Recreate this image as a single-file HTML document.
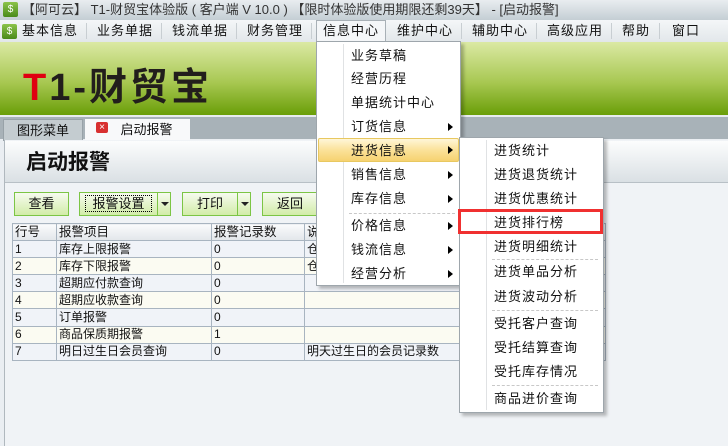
<!DOCTYPE html>
<html><head><meta charset="utf-8"><style>
*{margin:0;padding:0;box-sizing:border-box}
body{width:728px;height:446px;overflow:hidden;background:#eaeef2;font-family:"Liberation Sans","Noto Sans CJK SC","WenQuanYi Zen Hei",sans-serif;font-size:13px;color:#111;position:relative}
.abs{position:absolute}
#title{left:0;top:0;width:728px;height:20px;background:linear-gradient(#e9edf0,#c4ced4);color:#333;font-size:13px;line-height:20px;padding-left:22px}
.ico{width:15px;height:15px;background:linear-gradient(#8cc34a,#4a8a1a);border-radius:2px;color:#fff;font-size:10px;text-align:center;line-height:15px}
#menu{left:0;top:20px;width:728px;height:22px;background:linear-gradient(#f4f6f8,#e2e7ea);line-height:22px}
#menu span{position:absolute;top:0;font-size:13px;letter-spacing:1px;white-space:nowrap}
.msep{position:absolute;top:3px;width:1px;height:16px;background:#c8ced2}
#banner{left:0;top:42px;width:728px;height:73px;background:linear-gradient(#dbe9a4,#a8c852 55%,#6a9e08)}
#logo{left:23px;top:56px;font-size:38px;font-weight:bold;color:#221e1c;letter-spacing:3px;font-family:"Liberation Sans","Noto Sans CJK SC",sans-serif}
#tabs{left:0;top:115px;width:728px;height:24px;background:#a8b2b8;border-top:2px solid #e8ecee}
.tab{position:absolute;top:2px;height:22px;line-height:22px;text-align:center}
#panel{left:4px;top:140px;width:724px;height:306px;background:#f0f3f6;border-left:1px solid #b0b8be}
#ph{left:5px;top:141px;width:723px;height:42px;background:linear-gradient(#fcfdfd,#dae0e4);border-bottom:1px solid #b8c0c6;font-size:21px;font-weight:bold;line-height:44px;padding-left:21px;color:#111}
.btn{position:absolute;top:192px;height:24px;border:1px solid #7cc545;background:linear-gradient(#f6fbef,#d2eca8);text-align:center;line-height:22px;font-size:13px}
.dd{position:absolute;top:192px;height:24px;width:14px;border:1px solid #7cc545;background:linear-gradient(#f6fbef,#d2eca8)}
.dd:after{content:"";position:absolute;left:3px;top:9px;border:4px solid transparent;border-top:4px solid #222}
table{position:absolute;left:12px;top:223px;border-collapse:collapse;font-size:12px;width:594px;background:#f0f3f8}
td{border:1px solid #a8b4c0;height:17.1px;padding:0 2px;line-height:15px;white-space:nowrap;overflow:hidden}
tr.h td{background:linear-gradient(#fafbfc,#e2e6ea);font-size:12.5px}
tr.y td{background:#fbfbf2}
.pop{position:absolute;background:#fff;border:1px solid #9ea6ac;box-shadow:3px 3px 3px rgba(0,0,0,.25)}
.gut{position:absolute;top:2px;bottom:2px;width:1px;background:#e0e2e4}
.mi{position:absolute;font-size:13px;line-height:16px;letter-spacing:1px}
.arr{position:absolute;border:4px solid transparent;border-left:5px solid #000;width:0;height:0}
.sep{position:absolute;height:0;border-top:1px dashed #c8c8c8}
</style></head><body>
<div id="title" class="abs">【阿可云】 T1-财贸宝体验版 ( 客户端 V 10.0 ) 【限时体验版使用期限还剩39天】 - [启动报警]</div>
<div class="abs ico" style="left:3px;top:2px">&#36;</div>
<div id="menu" class="abs">
<div class="abs ico" style="left:2px;top:4px">&#36;</div>
<span style="left:22px">基本信息</span><div class="msep" style="left:86px"></div>
<span style="left:97px">业务单据</span><div class="msep" style="left:161px"></div>
<span style="left:172px">钱流单据</span><div class="msep" style="left:236px"></div>
<span style="left:247px">财务管理</span><div class="msep" style="left:311px"></div>
<span style="left:316px;top:0;height:22px;width:70px;padding-left:6px;border:1px solid #a8b0b6;border-bottom:none;background:#f4f6f8;line-height:20px">信息中心</span>
<span style="left:397px">维护中心</span><div class="msep" style="left:461px"></div>
<span style="left:472px">辅助中心</span><div class="msep" style="left:536px"></div>
<span style="left:547px">高级应用</span><div class="msep" style="left:611px"></div>
<span style="left:622px">帮助</span><div class="msep" style="left:659px"></div>
<span style="left:672px">窗口</span>
</div>
<div id="banner" class="abs"></div>
<div id="logo" class="abs"><span style="color:#e00010">T</span>1-财贸宝</div>
<div id="tabs" class="abs">
<div class="tab" style="left:3px;width:80px;background:#c4ccd0;border:1px solid #98a2a8">图形菜单</div>
<div class="tab" style="left:85px;width:105px;background:#f8f9fa;padding-left:18px">启动报警</div>
<div class="abs" style="left:96px;top:5px;width:12px;height:11px;background:#d83030;border-radius:2px;color:#fff;font-size:10px;line-height:11px;text-align:center">×</div>
</div>
<div id="panel" class="abs"></div>
<div id="ph" class="abs">启动报警</div>
<div class="btn" style="left:14px;width:55px">查看</div>
<div class="btn" style="left:79px;width:79px"><span style="border:1px dotted #000;padding:0 6px">报警设置</span></div><div class="dd" style="left:157px"></div>
<div class="btn" style="left:182px;width:56px">打印</div><div class="dd" style="left:237px"></div>
<div class="btn" style="left:262px;width:56px">返回</div>
<table>
<tr class="h"><td style="width:44px">行号</td><td style="width:155px">报警项目</td><td style="width:93px">报警记录数</td><td>说</td></tr>
<tr><td>1</td><td>库存上限报警</td><td>0</td><td>仓</td></tr>
<tr class="y"><td>2</td><td>库存下限报警</td><td>0</td><td>仓</td></tr>
<tr><td>3</td><td>超期应付款查询</td><td>0</td><td></td></tr>
<tr class="y"><td>4</td><td>超期应收款查询</td><td>0</td><td></td></tr>
<tr><td>5</td><td>订单报警</td><td>0</td><td></td></tr>
<tr class="y"><td>6</td><td>商品保质期报警</td><td>1</td><td></td></tr>
<tr><td>7</td><td>明日过生日会员查询</td><td>0</td><td>明天过生日的会员记录数</td></tr>
</table>

<div class="pop" style="left:316px;top:41px;width:145px;height:245px">
<div class="gut" style="left:26px"></div>
<div class="abs" style="left:1px;top:96px;width:141px;height:24px;border:1px solid #e8c860;border-radius:2px;background:linear-gradient(#fff6d8,#fbe29a 50%,#f6d270)"></div>
<div class="mi" style="left:34px;top:6px">业务草稿</div>
<div class="mi" style="left:34px;top:29px">经营历程</div>
<div class="mi" style="left:34px;top:53px">单据统计中心</div>
<div class="mi" style="left:34px;top:77px">订货信息</div><div class="arr" style="left:131px;top:81px"></div>
<div class="mi" style="left:34px;top:101px">进货信息</div><div class="arr" style="left:131px;top:104px"></div>
<div class="mi" style="left:34px;top:125px">销售信息</div><div class="arr" style="left:131px;top:129px"></div>
<div class="mi" style="left:34px;top:149px">库存信息</div><div class="arr" style="left:131px;top:153px"></div>
<div class="sep" style="left:32px;top:171px;width:106px"></div>
<div class="mi" style="left:34px;top:176px">价格信息</div><div class="arr" style="left:131px;top:180px"></div>
<div class="mi" style="left:34px;top:200px">钱流信息</div><div class="arr" style="left:131px;top:204px"></div>
<div class="mi" style="left:34px;top:224px">经营分析</div><div class="arr" style="left:131px;top:228px"></div>
</div>

<div class="pop" style="left:459px;top:137px;width:145px;height:276px">
<div class="gut" style="left:26px"></div>
<div class="mi" style="left:34px;top:5px">进货统计</div>
<div class="mi" style="left:34px;top:29px">进货退货统计</div>
<div class="mi" style="left:34px;top:53px">进货优惠统计</div>
<div class="mi" style="left:34px;top:77px">进货排行榜</div>
<div class="mi" style="left:34px;top:101px">进货明细统计</div>
<div class="sep" style="left:32px;top:121px;width:106px"></div>
<div class="mi" style="left:34px;top:126px">进货单品分析</div>
<div class="mi" style="left:34px;top:151px">进货波动分析</div>
<div class="sep" style="left:32px;top:172px;width:106px"></div>
<div class="mi" style="left:34px;top:178px">受托客户查询</div>
<div class="mi" style="left:34px;top:202px">受托结算查询</div>
<div class="mi" style="left:34px;top:226px">受托库存情况</div>
<div class="sep" style="left:32px;top:247px;width:106px"></div>
<div class="mi" style="left:34px;top:253px">商品进价查询</div>
</div>
<div class="abs" style="left:458px;top:209px;width:145px;height:25px;border:3px solid #f03030"></div>
</body></html>
